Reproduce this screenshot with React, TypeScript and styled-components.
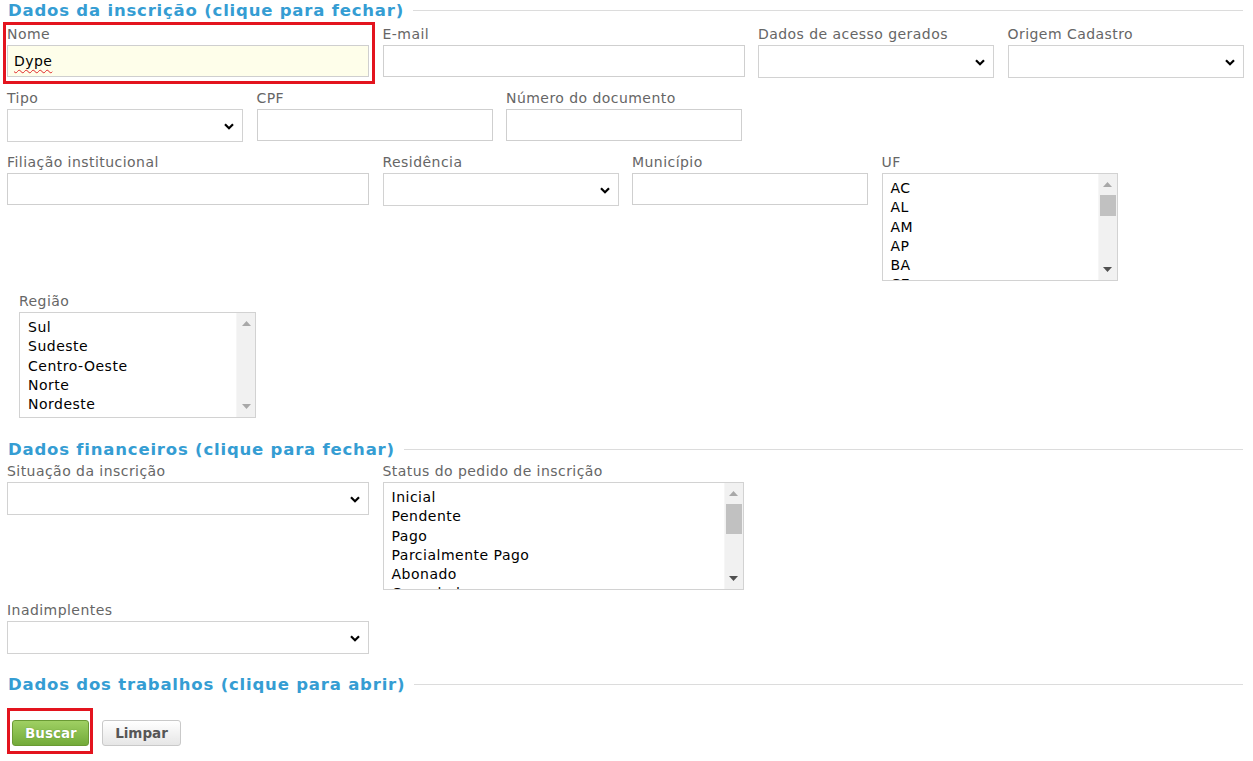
import React from "react";
import styled, { createGlobalStyle, css } from "styled-components";

const FONT = `"DejaVu Sans", Verdana, "Noto Sans", sans-serif`;

const GlobalStyle = createGlobalStyle`
  html, body {
    margin: 0;
    padding: 0;
    background: #fff;
    font-family: ${FONT};
  }
  * {
    box-sizing: border-box;
  }
`;

// red annotation frame drawn over a part of the form
const redBox = (t: number, r: number, b: number, l: number) => css`
  position: relative;
  &::after {
    content: "";
    position: absolute;
    top: ${t}px;
    right: ${r}px;
    bottom: ${b}px;
    left: ${l}px;
    border: 3px solid #e3141e;
    pointer-events: none;
  }
`;

const Page = styled.div`
  width: 1253px;
  padding: 0 10px 30px 7px;
`;

const SectionHeader = styled.div<{ $top: number; $bottom: number }>`
  display: flex;
  align-items: center;
  height: 22px;
  margin-top: ${(p) => p.$top}px;
  margin-bottom: ${(p) => p.$bottom}px;
  padding-left: 1px;
  cursor: pointer;
`;

const SectionTitle = styled.h2`
  margin: 0;
  font-family: ${FONT};
  font-size: 16.5px;
  font-weight: bold;
  letter-spacing: 0.8px;
  line-height: 22px;
  color: #359dd3;
  white-space: nowrap;
`;

const SectionRule = styled.div`
  flex: 1;
  height: 1px;
  margin-left: 9px;
  margin-top: -1px;
  background: #dcdcdc;
`;

const Row = styled.div<{ $indent?: number }>`
  display: flex;
  align-items: flex-start;
  gap: 13.5px;
  margin-bottom: 12px;
  padding-left: ${(p) => p.$indent ?? 0}px;
`;

const Field = styled.div<{ $w: number; $mark?: boolean }>`
  width: ${(p) => p.$w}px;
  flex: none;
  ${(p) => p.$mark && redBox(-4.5, -6, -7, -4)}
`;

const Label = styled.label`
  display: block;
  font-size: 14px;
  letter-spacing: 0.45px;
  line-height: 17px;
  color: #666;
  margin-bottom: 2px;
  white-space: nowrap;
`;

const InputWrap = styled.div`
  position: relative;
`;

const TextInput = styled.input<{ $filled?: boolean }>`
  display: block;
  width: 100%;
  height: 32px;
  margin: 0;
  padding: 0 6px;
  border: 1px solid #cfcfcf;
  border-radius: 0;
  background: ${(p) => (p.$filled ? "#fefeea" : "#fff")};
  font-family: ${FONT};
  font-size: 14px;
  letter-spacing: 0.45px;
  color: #000;
  outline: none;
`;

const Squiggle = styled.span`
  position: absolute;
  left: 7px;
  top: 8px;
  font-size: 14px;
  letter-spacing: 0.45px;
  line-height: 17px;
  color: transparent;
  text-decoration: underline wavy #e0262a;
  text-decoration-thickness: 1px;
  text-underline-offset: 3px;
  pointer-events: none;
`;

const SelectBox = styled.select`
  display: block;
  width: 100%;
  height: 33px;
  margin: 0;
  padding: 0 28px 0 6px;
  border: 1px solid #d2d2d2;
  border-radius: 0;
  background: #fff;
  appearance: none;
  font-family: ${FONT};
  font-size: 14px;
  color: #000;
  outline: none;
`;

const Chevron = styled.svg`
  position: absolute;
  right: 9px;
  top: 50%;
  margin-top: -3px;
  pointer-events: none;
`;

const ListBox = styled.div<{ $h: number }>`
  display: flex;
  height: ${(p) => p.$h}px;
  border: 1px solid #d2d2d2;
  background: #fff;
  overflow: hidden;
`;

const OptionList = styled.ul`
  flex: 1;
  margin: 0;
  padding: 5px 8px 0;
  list-style: none;
  overflow: hidden;
`;

const Option = styled.li`
  font-size: 14px;
  letter-spacing: 0.5px;
  line-height: 19.3px;
  color: #000;
  white-space: nowrap;
`;

const ScrollTrack = styled.div`
  width: 19px;
  flex: none;
  display: flex;
  flex-direction: column;
  background: #f1f1f1;
  border-left: 1px solid #f6f6f6;
`;

const ScrollButton = styled.div`
  height: 21px;
  flex: none;
  display: flex;
  align-items: center;
  justify-content: center;
`;

const Thumb = styled.div<{ $h: number }>`
  height: ${(p) => p.$h}px;
  margin: 0 1px;
  background: #c1c1c1;
`;

const Spacer = styled.div`
  flex: 1;
`;

const ButtonBar = styled.div`
  display: flex;
  gap: 13px;
  margin-top: 24px;
  padding-left: 5px;
`;

const ButtonSlot = styled.span<{ $mark?: boolean }>`
  display: inline-flex;
  ${(p) => p.$mark && redBox(-12, -4, -8, -5)}
`;

const Button = styled.button<{ $primary?: boolean }>`
  height: 26px;
  padding: 0 12px;
  border-radius: 3px;
  font-family: ${FONT};
  font-size: 13.5px;
  font-weight: bold;
  cursor: pointer;
  ${(p) =>
    p.$primary
      ? css`
          width: 77px;
          border: 1px solid #6a9a34;
          background: linear-gradient(#9fd063, #73ab3a);
          color: #fff;
          text-shadow: 0 0 1px #4f7a22;
        `
      : css`
          width: 79px;
          border: 1px solid #c9c9c9;
          background: linear-gradient(#ffffff, #e6e6e6);
          color: #565656;
        `}
`;

function Select() {
  return (
    <InputWrap>
      <SelectBox defaultValue="">
        <option value=""></option>
      </SelectBox>
      <Chevron width="10" height="7" viewBox="0 0 10 7">
        <path d="M1 1.2 L5 5.2 L9 1.2" fill="none" stroke="#000" strokeWidth="2.2" />
      </Chevron>
    </InputWrap>
  );
}

function Arrow({ up, dim }: { up?: boolean; dim?: boolean }) {
  return (
    <svg width="9" height="5" viewBox="0 0 9 5">
      <path
        d={up ? "M0 5 L4.5 0 L9 5 Z" : "M0 0 L4.5 5 L9 0 Z"}
        fill={dim ? "#a8a8a8" : "#505050"}
      />
    </svg>
  );
}

function List({
  items,
  height = 108,
  thumb,
}: {
  items: string[];
  height?: number;
  thumb?: number;
}) {
  return (
    <ListBox $h={height}>
      <OptionList>
        {items.map((it) => (
          <Option key={it}>{it}</Option>
        ))}
      </OptionList>
      <ScrollTrack>
        <ScrollButton>
          <Arrow up dim />
        </ScrollButton>
        {thumb ? <Thumb $h={thumb} /> : null}
        <Spacer />
        <ScrollButton>
          <Arrow dim={!thumb} />
        </ScrollButton>
      </ScrollTrack>
    </ListBox>
  );
}

const WIDE = 362;
const NARROW = 236;

export default function App() {
  return (
    <Page>
      <GlobalStyle />

      <SectionHeader $top={0} $bottom={4}>
        <SectionTitle>Dados da inscrição (clique para fechar)</SectionTitle>
        <SectionRule />
      </SectionHeader>

      <Row>
        <Field $w={WIDE} $mark>
          <Label>Nome</Label>
          <InputWrap>
            <TextInput $filled defaultValue="Dype" />
            <Squiggle>Dype</Squiggle>
          </InputWrap>
        </Field>
        <Field $w={WIDE}>
          <Label>E-mail</Label>
          <TextInput />
        </Field>
        <Field $w={NARROW}>
          <Label>Dados de acesso gerados</Label>
          <Select />
        </Field>
        <Field $w={NARROW}>
          <Label>Origem Cadastro</Label>
          <Select />
        </Field>
      </Row>

      <Row>
        <Field $w={NARROW}>
          <Label>Tipo</Label>
          <Select />
        </Field>
        <Field $w={NARROW}>
          <Label>CPF</Label>
          <TextInput />
        </Field>
        <Field $w={NARROW}>
          <Label>Número do documento</Label>
          <TextInput />
        </Field>
      </Row>

      <Row>
        <Field $w={WIDE}>
          <Label>Filiação institucional</Label>
          <TextInput />
        </Field>
        <Field $w={NARROW}>
          <Label>Residência</Label>
          <Select />
        </Field>
        <Field $w={NARROW}>
          <Label>Município</Label>
          <TextInput />
        </Field>
        <Field $w={NARROW}>
          <Label>UF</Label>
          <List items={["AC", "AL", "AM", "AP", "BA", "CE"]} thumb={21} />
        </Field>
      </Row>

      <Row $indent={12}>
        <Field $w={237}>
          <Label>Região</Label>
          <List
            height={106}
            items={["Sul", "Sudeste", "Centro-Oeste", "Norte", "Nordeste"]}
          />
        </Field>
      </Row>

      <SectionHeader $top={21} $bottom={2}>
        <SectionTitle>Dados financeiros (clique para fechar)</SectionTitle>
        <SectionRule />
      </SectionHeader>

      <Row>
        <Field $w={WIDE}>
          <Label>Situação da inscrição</Label>
          <Select />
        </Field>
        <Field $w={361}>
          <Label>Status do pedido de inscrição</Label>
          <List
            items={["Inicial", "Pendente", "Pago", "Parcialmente Pago", "Abonado", "Cancelado"]}
            thumb={30}
          />
        </Field>
      </Row>

      <Row>
        <Field $w={WIDE}>
          <Label>Inadimplentes</Label>
          <Select />
        </Field>
      </Row>

      <SectionHeader $top={20} $bottom={0}>
        <SectionTitle>Dados dos trabalhos (clique para abrir)</SectionTitle>
        <SectionRule />
      </SectionHeader>

      <ButtonBar>
        <ButtonSlot $mark>
          <Button $primary>Buscar</Button>
        </ButtonSlot>
        <ButtonSlot>
          <Button>Limpar</Button>
        </ButtonSlot>
      </ButtonBar>
    </Page>
  );
}
